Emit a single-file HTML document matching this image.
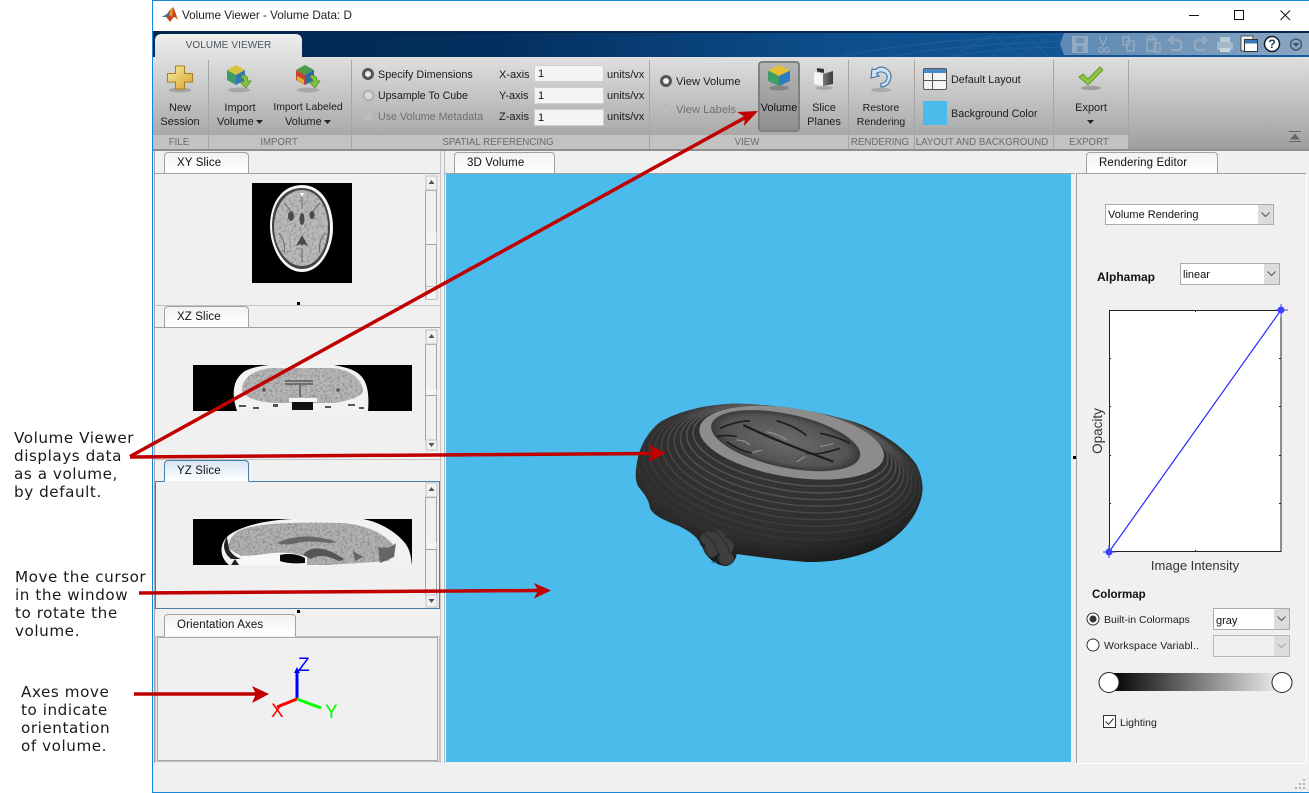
<!DOCTYPE html>
<html><head><meta charset="utf-8"><title>Volume Viewer</title>
<style>
html,body{margin:0;padding:0;background:#fff;width:1309px;height:793px;overflow:hidden}
body{position:relative;font-family:"Liberation Sans",sans-serif;font-size:11px;color:#1c1c1c}
.a{position:absolute}
.t{position:absolute;white-space:nowrap;line-height:14px;font-size:10.8px;color:#1c1c1c}
.c{transform:translateX(-50%)}
.sec{position:absolute;top:135px;height:14px;line-height:15px;font-size:9.7px;color:#6c6c6c;white-space:nowrap;transform:translateX(-50%)}
.sep{position:absolute;top:60px;width:1px;height:89px;background:#a6a6a6}
.note{position:absolute;left:14px;font-family:"DejaVu Sans",sans-serif;font-size:15.2px;letter-spacing:.55px;line-height:18px;color:#1a1a1a;white-space:nowrap}
.tab{position:absolute;height:21px;box-sizing:border-box;border:1px solid #a2a2a2;border-bottom:none;border-radius:4px 4px 0 0;background:linear-gradient(#f2f2f2,#fff);text-align:left;line-height:21px;font-size:11.5px;letter-spacing:.12px;color:#111;padding-left:12px}
.hl{position:absolute;height:1px;background:#a0a0a0}
.vl{position:absolute;width:1px;background:#a0a0a0}
.inp{position:absolute;left:534px;width:70px;height:17px;box-sizing:border-box;background:#f4f4f4;border:1px solid #cfcfcf;line-height:17px;padding-left:3px;font-size:11px;color:#111}
.rad{position:absolute;width:11px;height:11px;border-radius:50%;box-sizing:border-box;background:radial-gradient(#e4e4e4,#bdbdbd);border:1px solid #a0a0a0}
.rad.on{border:3px solid #555;background:#eee;width:12px;height:12px}
.rad.off{border-color:#b5b5b5;background:#bcbcbc}
.dd{position:absolute;box-sizing:border-box;border:1px solid #ababab;background:#fff;font-size:11px;padding-left:2px;color:#111}
.dd i{position:absolute;right:0;top:0;bottom:0;width:15px;background:#dcdcdc}
.dd svg{position:absolute;right:3px;top:50%;margin-top:-3px}
</style></head><body>

<!-- window frame -->
<div class="a" style="left:152px;top:0;width:1157px;height:793px;box-sizing:border-box;border:1px solid #1a86d8;border-right:none;background:#f0f0f0"></div>
<div class="a" style="left:153px;top:1px;width:1156px;height:30px;background:#fff"></div>

<!-- title -->
<svg class="a" style="left:161px;top:6px" width="18" height="18" viewBox="0 0 18 18"><path d="M1 11l5-3 3-4 3-3c2 3 3 8 5 13-2-2-3-3-4-3-2 2-3 4-4 5-2-3-3-4-4-5z" fill="#c9401a"/><path d="M1 11l5-3 3-4c-1 3-1 5-2 7-1 0-3 0-6 0z" fill="#3f6f9a"/><path d="M12 1c-2 1-3 5-4 8l3 2c1-3 1-7 1-10z" fill="#e8922a"/></svg>
<div class="t" style="left:182px;top:9px;font-size:11.7px;color:#222">Volume Viewer - Volume Data: D</div>
<svg class="a" style="left:1180px;top:4px" width="125" height="22" viewBox="0 0 125 22"><path d="M9 11.5h10" stroke="#111" fill="none"/><rect x="54.5" y="6.5" width="9" height="9" fill="none" stroke="#111"/><path d="M100.5 6.500l9.500 9.500M110 6.500l-9.500 9.500" stroke="#111" fill="none"/></svg>

<!-- dark band -->
<div class="a" style="left:153px;top:31px;width:1156px;height:26px;background:linear-gradient(90deg,#02274d 0%,#032f5f 30%,#0e4f8e 60%,#175c9c 100%)"></div>
<svg class="a" style="left:800px;top:31px" width="280" height="26" viewBox="0 0 280 26"><g stroke="#2f6fa8" stroke-width=".7" fill="none" opacity=".55"><path d="M40 26C90 14 160 8 280 2M90 26C140 16 200 12 280 10M150 26c40-8 80-10 130-10M200 0l-50 26M230 0l-40 26M260 0l-40 26M190 0l30 26M220 0l30 26M250 0l30 26"/></g></svg>
<div class="a" style="left:153px;top:31px;width:1156px;height:2px;background:#03264c"></div>
<div class="a" style="left:155px;top:34px;width:147px;height:24px;box-sizing:border-box;background:linear-gradient(#efefef,#dcdcdc);border-radius:6px 6px 0 0;text-align:center;line-height:24px;font-size:10px;color:#4a5560;letter-spacing:.1px">VOLUME VIEWER</div>

<!-- quick access -->
<svg class="a" style="left:1058px;top:33px" width="251" height="24" viewBox="0 0 251 24">
<defs><linearGradient id="qa" x1="0" x2="1" y1="0" y2="0"><stop offset="0" stop-color="#5c89b3"/><stop offset="1" stop-color="#8aa6c2"/></linearGradient></defs>
<path d="M6 0H251V22H6L2 11z" fill="url(#qa)"/>
<g fill="none" stroke="#94a9bf" stroke-width="2">
<rect x="15" y="4" width="14" height="15" fill="#94a9bf"/><rect x="18" y="5" width="8" height="5" fill="#6f94b8" stroke="none"/><rect x="19" y="13" width="6" height="6" fill="#6f94b8" stroke="none"/>
<path d="M41 3l4 10M49 3l-4 10" stroke-width="1.200"/><circle cx="43" cy="17" r="2.500" stroke-width="1.200"/><circle cx="49" cy="17" r="2.500" stroke-width="1.200"/>
<rect x="65" y="4" width="6" height="8" stroke-width="1.500"/><rect x="69" y="8" width="7" height="10" stroke-width="1.500"/>
<rect x="89" y="6" width="9" height="12" stroke-width="1.500"/><rect x="96" y="10" width="6" height="9" stroke-width="1.500"/><rect x="91" y="3" width="5" height="4" stroke-width="1.200"/>
<path d="M112 7h7c6 0 6 10 0 10h-6M116 3l-5 4 5 4" stroke-width="2.200"/><path d="M147 17h-6c-6 0-6-10 0-10h7M144 3l5 4-5 4" stroke-width="2.200"/></g>
<rect x="159" y="9" width="16" height="8" rx="1" fill="#a5b8ca"/><rect x="162" y="4" width="10" height="5" fill="#bac9d6"/><rect x="162" y="15" width="10" height="4" fill="#c9d4de"/>
<rect x="183" y="3" width="12" height="15" fill="#f2f2f2" stroke="#333" stroke-width=".8"/><rect x="186.500" y="6.500" width="13" height="12" fill="#fff" stroke="#333" stroke-width="1"/><rect x="187" y="7" width="12" height="3.500" fill="#3a78ba"/>
</svg>
<svg class="a" style="left:1263px;top:35px" width="44" height="20" viewBox="0 0 44 20"><circle cx="9" cy="9" r="7.500" fill="#fff" stroke="#123" stroke-width="1.500"/><text x="9" y="13" font-family="Liberation Sans" font-size="12" font-weight="700" fill="#123a66" text-anchor="middle">?</text><circle cx="33" cy="9.500" r="5.500" fill="none" stroke="#3e5468" stroke-width="1.300"/><path d="M29.500 8h7l-3.500 4z" fill="#3e5468"/></svg>

<!-- toolstrip -->
<div class="a" style="left:153px;top:57px;width:1156px;height:78px;background:linear-gradient(#dfdfdf,#a9a9a9)"></div>
<div class="a" style="left:153px;top:135px;width:975px;height:14px;background:#c2c2c2"></div>
<div class="a" style="left:1128px;top:135px;width:181px;height:14px;background:linear-gradient(#a9a9a9,#9d9d9d)"></div>
<div class="a" style="left:153px;top:149px;width:1156px;height:2px;background:#8e8e8e"></div>
<div class="sep" style="left:208px"></div><div class="sep" style="left:351px"></div><div class="sep" style="left:649px"></div><div class="sep" style="left:848px"></div><div class="sep" style="left:914px"></div><div class="sep" style="left:1053px"></div><div class="sep" style="left:1128px"></div>

<div class="sec" style="left:179px">FILE</div><div class="sec" style="left:279px">IMPORT</div><div class="sec" style="left:498px">SPATIAL REFERENCING</div><div class="sec" style="left:747px">VIEW</div><div class="sec" style="left:880px">RENDERING</div><div class="sec" style="left:982px">LAYOUT AND BACKGROUND</div><div class="sec" style="left:1089px">EXPORT</div>

<!-- icon: new session -->
<svg class="a" style="left:166px;top:63px" width="28" height="32" viewBox="0 0 28 32"><defs><linearGradient id="gd" x1="0" y1="0" x2="1" y2="1"><stop offset="0" stop-color="#f8e9a8"/><stop offset="1" stop-color="#d6a52a"/></linearGradient></defs><ellipse cx="14" cy="27" rx="11" ry="2.500" fill="#8c8c8c" opacity=".6"/><path d="M9.500 3h9v7.500h8v8.500h-8v7h-9v-7h-8v-8.500h8z" fill="url(#gd)" stroke="#a8801e"/></svg>
<div class="t c" style="left:180px;top:101px;font-size:11px">New</div><div class="t c" style="left:180px;top:115px;font-size:11px">Session</div>

<!-- icon: import volume -->
<svg class="a" style="left:225px;top:63px" width="30" height="32" viewBox="0 0 30 32"><ellipse cx="14" cy="27" rx="11" ry="2.500" fill="#8c8c8c" opacity=".55"/><path d="M2 7l9-5 9 5-9 5z" fill="#d8c23a"/><path d="M2 7l9 5v10l-9-5z" fill="#3f9a6a"/><path d="M11 12l9-5v10l-9 5z" fill="#2e78b8"/><path d="M17 12c4 0 6 2 6 6h3l-5 7-6-6h4c0-3-1-4-3-4z" fill="#7cc442" stroke="#4d8a22" stroke-width=".7"/></svg>
<div class="t c" style="left:240px;top:101px;font-size:11px">Import</div><div class="t" style="left:217px;top:115px;font-size:11px">Volume</div>
<svg class="a" style="left:255px;top:120px" width="10" height="5"><path d="M1 0h7l-3.500 4z" fill="#222"/></svg>

<!-- icon: import labeled -->
<svg class="a" style="left:294px;top:63px" width="30" height="32" viewBox="0 0 30 32"><ellipse cx="14" cy="27" rx="11" ry="2.500" fill="#8c8c8c" opacity=".55"/><path d="M2 7l9-5 9 5-9 5z" fill="#4d9a4a"/><path d="M2 7l9 5v10l-9-5z" fill="#c9462c"/><path d="M11 12l9-5v10l-9 5z" fill="#2e66a8"/><path d="M3 13l7 4v4l-7-4z" fill="#e0b82e"/><path d="M17 12c4 0 6 2 6 6h3l-5 7-6-6h4c0-3-1-4-3-4z" fill="#7cc442" stroke="#4d8a22" stroke-width=".7"/></svg>
<div class="t c" style="left:308px;top:101px;font-size:10.4px">Import Labeled</div><div class="t" style="left:285px;top:115px;font-size:11px">Volume</div>
<svg class="a" style="left:323px;top:120px" width="10" height="5"><path d="M1 0h7l-3.500 4z" fill="#222"/></svg>

<!-- spatial referencing -->
<div class="rad on" style="left:362px;top:68px"></div><div class="t" style="left:378px;top:68px">Specify Dimensions</div>
<div class="rad" style="left:363px;top:90px"></div><div class="t" style="left:378px;top:89px;font-size:10.6px">Upsample To Cube</div>
<div class="rad off" style="left:363px;top:111px"></div><div class="t" style="left:378px;top:110px;color:#707070;font-size:10.7px">Use Volume Metadata</div>
<div class="t" style="left:499px;top:68px;font-size:11px">X-axis</div><div class="t" style="left:499px;top:89px;font-size:11px">Y-axis</div><div class="t" style="left:499px;top:110px;font-size:11px">Z-axis</div>
<div class="inp" style="top:65px">1</div><div class="inp" style="top:87px">1</div><div class="inp" style="top:109px">1</div>
<div class="t" style="left:607px;top:68px;font-size:11px">units/vx</div><div class="t" style="left:607px;top:89px;font-size:11px">units/vx</div><div class="t" style="left:607px;top:110px;font-size:11px">units/vx</div>

<!-- view -->
<div class="rad on" style="left:660px;top:75px"></div><div class="t" style="left:676px;top:75px;font-size:11.2px">View Volume</div>
<div class="rad off" style="left:661px;top:104px"></div><div class="t" style="left:676px;top:103px;color:#707070;font-size:11.2px">View Labels</div>
<div class="a" style="left:758px;top:61px;width:42px;height:71px;box-sizing:border-box;border:2px solid #808080;border-radius:4px;background:linear-gradient(#b5b5b5,#8f8f8f)"></div>
<svg class="a" style="left:766px;top:64px" width="26" height="28" viewBox="0 0 26 28"><ellipse cx="13" cy="24" rx="10" ry="2.500" fill="#707070" opacity=".6"/><path d="M13 1l11 5.500-11 5.500L2 6.500z" fill="#e3c132"/><path d="M2 6.500l11 5.500v10L2 17z" fill="#3f9d68"/><path d="M13 12l11-5.500V17l-11 5z" fill="#2b7cc0"/></svg>
<div class="t c" style="left:779px;top:101px;color:#111;font-size:11px">Volume</div>
<svg class="a" style="left:812px;top:66px" width="24" height="26" viewBox="0 0 24 26"><defs><linearGradient id="sl" x1="0" x2="1" y1="0" y2="0"><stop offset="0" stop-color="#777"/><stop offset="1" stop-color="#3a3a3a"/></linearGradient></defs><ellipse cx="12" cy="22" rx="9" ry="2" fill="#8c8c8c" opacity=".5"/><path d="M2 6l9 2v12l-9-2z" fill="#f5f5f5"/><path d="M11 8l10-3v13l-10 2z" fill="url(#sl)"/><path d="M5 2l7 1v4l-7-1.500z" fill="#333"/></svg>
<div class="t c" style="left:824px;top:101px;font-size:11px">Slice</div><div class="t c" style="left:824px;top:115px;font-size:11px">Planes</div>
<svg class="a" style="left:866px;top:63px" width="30" height="32" viewBox="0 0 30 32"><ellipse cx="15" cy="27" rx="10" ry="2.200" fill="#8c8c8c" opacity=".5"/><path d="M6 6l-1 9 8-2-2.500-2.500C14 7.500 20 9 21 13c.8 4-2 7-6 7.500v3.500c6 0 10-5 10-11C24 6 16 1 9.500 6.500z" fill="#cfe3f2" stroke="#3d6f9e" stroke-width="1.100"/></svg>
<div class="t c" style="left:881px;top:101px;font-size:10.5px">Restore</div><div class="t c" style="left:881px;top:115px;font-size:10.5px">Rendering</div>

<!-- layout -->
<svg class="a" style="left:923px;top:68px" width="24" height="23" viewBox="0 0 24 23"><rect x=".5" y=".5" width="23" height="21" rx="1.500" fill="#f4f4f4" stroke="#555"/><rect x="1" y="1" width="22" height="4" fill="#4a8cc7"/><path d="M1 12.500h22M9.500 5v17" stroke="#555" fill="none"/></svg>
<div class="t" style="left:951px;top:73px;font-size:10.8px">Default Layout</div>
<div class="a" style="left:923px;top:101px;width:24px;height:24px;background:#4bbbec"></div>
<div class="t" style="left:951px;top:107px;font-size:10.8px">Background Color</div>

<!-- export -->
<svg class="a" style="left:1077px;top:66px" width="28" height="28" viewBox="0 0 28 28"><ellipse cx="14" cy="22" rx="10" ry="2.200" fill="#808080" opacity=".6"/><path d="M2 11l4-3 5 5L23 1l3 3-15 15z" fill="#8cc63f" stroke="#5c8c2a" stroke-width=".8"/></svg>
<div class="t c" style="left:1091px;top:101px;font-size:11px">Export</div>
<svg class="a" style="left:1086px;top:120px" width="10" height="5"><path d="M1 0h7l-3.500 4z" fill="#222"/></svg>
<svg class="a" style="left:1289px;top:131px" width="12" height="12"><path d="M0 .5h12" stroke="#666"/><path d="M6 2.500L11 8.500H1z" fill="#666"/><path d="M0 10.500h12" stroke="#666"/></svg>

<!-- LEFT PANELS -->
<svg width="0" height="0" class="a"><defs>
<filter id="nz" x="0" y="0" width="1" height="1"><feTurbulence type="fractalNoise" baseFrequency=".4" numOctaves="2" seed="4"/><feColorMatrix values="0 0 0 0 0 0 0 0 0 0 0 0 0 0 0 1.100 0 0 0 -.45"/><feComposite in2="SourceAlpha" operator="in" result="s"/><feMerge><feMergeNode in="SourceGraphic"/><feMergeNode in="s"/></feMerge></filter>
</defs></svg>
<div class="a" style="left:154px;top:151px;width:1px;height:612px;background:#a8a8a8"></div>
<div class="a" style="left:440px;top:151px;width:1px;height:612px;background:#c4c4c4"></div>
<div class="hl" style="left:154px;top:173px;width:286px"></div>
<div class="tab" style="left:164px;top:152px;width:85px">XY Slice</div>
<svg class="a" style="left:252px;top:183px" width="100" height="100" viewBox="0 0 100 100"><rect width="100" height="100" fill="#000"/>
<path d="M50 2c20 0 31 20 31 43 0 20-12 44-31 44-20 0-32-25-32-46C18 20 30 2 50 2z" fill="#f6f6f6"/>
<path d="M50 5c18 0 28 18 28 40 0 19-10 41-28 41S20 63 20 43C20 20 32 5 50 5z" fill="#444"/>
<path d="M50 7c16 0 26 17 26 37 0 18-9 39-26 39S22 62 22 44C22 24 34 7 50 7z" fill="#bcbcbc" filter="url(#nz)"/>
<g fill="#4a4a4a"><ellipse cx="39" cy="33" rx="3" ry="5"/><ellipse cx="60" cy="32" rx="2.500" ry="4"/><ellipse cx="50" cy="36" rx="2.500" ry="6"/><path d="M50 52l-6 11 5-2 1 3 1-3 5 2z"/></g><g fill="none" stroke="#6a6a6a" stroke-width="1"><path d="M27 50c4 5 7 12 5 20M73 50c-4 5-7 12-5 20M32 20c3 3 6 6 7 10M68 20c-3 3-6 6-7 10M50 10v16M50 65v14"/></g><path d="M48 10l2 4 2-4z" fill="#fff"/></svg>
<div class="a" style="left:297px;top:302px;width:3px;height:3px;background:#000"></div>
<div class="hl" style="left:154px;top:305px;width:286px;background:#c4c4c4"></div>
<div class="hl" style="left:154px;top:327px;width:286px"></div>
<div class="tab" style="left:164px;top:306px;width:85px">XZ Slice</div>
<svg class="a" style="left:193px;top:365px" width="219" height="46" viewBox="0 0 219 46"><rect width="219" height="46" fill="#000"/>
<path d="M44 46C38 28 40 14 52 6 58 3 66 1 76 0h65c10 2 20 4 26 10 9 8 9 24 8 36z" fill="#f2f2f2"/>
<path d="M49 26C48 14 60 4 80 3h58c20 1 32 12 32 24-3 5-12 8-28 11H82C66 37 52 33 49 26z" fill="#b8b8b8" filter="url(#nz)"/>
<path d="M92 16h28M92 19h28M107 18v14" stroke="#666" stroke-width="1.800" fill="none"/>
<rect x="99" y="37" width="21" height="8" fill="#111"/><path d="M96 33h28v4H96z" fill="#f6f6f6"/>
<g fill="#555"><circle cx="71" cy="25" r="1.800"/><circle cx="145" cy="25" r="1.800"/><path d="M46 40h7v2h-7zM60 42h6v2h-6zM80 39h5v3h-5zM132 41h6v2h-6zM155 39h7v2h-7zM166 42h5v2h-5z"/></g></svg>
<div class="hl" style="left:154px;top:459px;width:286px;background:#c4c4c4"></div>
<div class="a" style="left:155px;top:481px;width:285px;height:128px;box-sizing:border-box;border:1px solid #4a7ca8"></div>
<div class="tab" style="left:164px;top:460px;width:85px;border-color:#4a7ca8;background:linear-gradient(#d9e6f3,#fff);height:22px;border-bottom:1px solid #f0f0f0">YZ Slice</div>
<svg class="a" style="left:193px;top:519px" width="219" height="46" viewBox="0 0 219 46"><rect width="219" height="46" fill="#000"/>
<path d="M36 46C26 38 26 24 36 16 50 6 75 1 100 0h70c16 3 32 12 42 24 6 8 6 16 7 22z" fill="#f2f2f2"/>
<path d="M36 30c-2-8 4-16 14-20C70 4 100 3 150 4c22 2 42 10 52 24l-6 14-60 4H110L90 38H50z" fill="#b2b2b2" filter="url(#nz)"/>
<path d="M84 24c8-4 22-8 38-6 8 1 16 3 22 5l-8 1c-14-2-24-2-32 0-8 2-14 2-20 0z" fill="#666"/>
<path d="M110 36c8-10 22-8 38 2 4 2 2 4-2 4-8-4-20-8-28-2z" fill="#555"/>
<path d="M40 36c10 2 24 0 40-2 10-1 24 0 34 4v8H48z" fill="#f8f8f8"/>
<path d="M87 36c8-2 18-1 25 3v5c-10 1-20 0-25-2z" fill="#0a0a0a"/>
<path d="M34 18c-4 6-4 12 0 18l4 4 10 0c-6-2-10-6-12-10zM42 40l4 6h-8z" fill="#222"/>
<path d="M185 28c8 2 14 0 18-4l-2 14-14 6zM160 32l10 6-8 4z" fill="#666"/></svg>
<div class="a" style="left:297px;top:610px;width:3px;height:3px;background:#000"></div>
<div class="a" style="left:155px;top:636px;width:285px;height:126px;box-sizing:border-box;border:1px solid #bdbdbd"></div>
<div class="a" style="left:157px;top:637px;width:281px;height:124px;box-sizing:border-box;border:1px solid #a8a8a8"></div>
<div class="tab" style="left:164px;top:614px;width:132px;height:23px;border-bottom:1px solid #f0f0f0">Orientation Axes</div>

<!-- scrollbars -->
<svg class="a" style="left:425px;top:175px" width="14" height="125" viewBox="0 0 14 125"><path d="M.5 15v109M11.500 15v109M.5 15.500h11M.5 69.500h11" stroke="#a4a4a4" fill="none"/><rect x="1.500" y="57" width="10" height="12" fill="#f4f4f4"/><rect x="1" y="1" width="11" height="14" fill="#f2f2f2" stroke="#c0c0c0"/><path d="M3.500 9h6L6.500 5z" fill="#555"/><rect x="1" y="111.500" width="11" height="13" fill="#f2f2f2" stroke="#c0c0c0"/></svg>
<svg class="a" style="left:425px;top:329px" width="14" height="122" viewBox="0 0 14 122"><path d="M.5 15v96M11.500 15v96M.5 15.500h11M.5 66.500h11" stroke="#a4a4a4" fill="none"/><rect x="1.500" y="60" width="10" height="6" fill="#f4f4f4"/><rect x="1" y="1" width="11" height="14" fill="#f2f2f2" stroke="#c0c0c0"/><path d="M3.500 9h6L6.500 5z" fill="#555"/><rect x="1" y="111" width="11" height="10" fill="#f2f2f2" stroke="#c0c0c0"/><path d="M3.500 114h6l-3 4z" fill="#555"/></svg>
<svg class="a" style="left:425px;top:482px" width="14" height="126" viewBox="0 0 14 126"><path d="M.5 15v98M11.500 15v98M.5 15.500h11M.5 67.500h11" stroke="#a4a4a4" fill="none"/><rect x="1.500" y="60" width="10" height="7" fill="#f4f4f4"/><rect x="1" y="1" width="11" height="14" fill="#f2f2f2" stroke="#c0c0c0"/><path d="M3.500 9h6L6.500 5z" fill="#555"/><rect x="1" y="113" width="11" height="12" fill="#f2f2f2" stroke="#c0c0c0"/><path d="M3.500 117h6l-3 4z" fill="#555"/></svg>

<!-- orientation axes -->
<svg class="a" style="left:260px;top:650px" width="90" height="80" viewBox="260 650 90 80"><path d="M297 699V672" stroke="#00f" stroke-width="3"/><path d="M294 673l3-6 3 6z" fill="#00f"/><path d="M297 699l-20 8" stroke="#f00" stroke-width="3"/><path d="M297 699l24 9" stroke="#0f0" stroke-width="3"/>
<text x="298" y="671" font-family="Liberation Sans" font-size="19" fill="#00f">Z</text>
<text x="271" y="717" font-family="Liberation Sans" font-size="19" fill="#f00">X</text>
<text x="325" y="718" font-family="Liberation Sans" font-size="19" fill="#0f0">Y</text></svg>

<!-- CENTER -->
<div class="hl" style="left:444px;top:173px;width:631px"></div>
<div class="tab" style="left:454px;top:152px;width:101px">3D Volume</div>
<div class="vl" style="left:444px;top:151px;height:612px;background:#bbb"></div>
<div class="a" style="left:446px;top:174px;width:625px;height:588px;background:#4bbbec"></div>
<div class="a" style="left:1073px;top:456px;width:3px;height:3px;background:#000"></div>

<!-- 3D head -->
<svg class="a" style="left:620px;top:390px" width="320" height="190" viewBox="0 0 960 570">
<defs>
<clipPath id="hd"><path d="M47 255C50 190 70 140 115 100 160 70 240 45 340 41 460 42 600 65 700 95 790 125 860 180 890 225 905 255 912 290 905 320 890 380 850 430 790 465 730 500 640 518 560 516 480 510 410 500 350 492 347 512 335 528 315 528 290 525 270 510 255 490 240 450 225 430 170 405 130 390 100 375 90 355 86 325 70 310 55 290 50 280 47 270 47 255Z"/></clipPath>
<radialGradient id="hg" cx=".5" cy=".35" r=".65"><stop offset="0" stop-color="#363636"/><stop offset=".75" stop-color="#2e2e2e"/><stop offset="1" stop-color="#1a1a1a"/></radialGradient>
<radialGradient id="br" cx=".5" cy=".5" r=".55"><stop offset="0" stop-color="#727272"/><stop offset=".75" stop-color="#5a5a5a"/><stop offset="1" stop-color="#2e2e2e"/></radialGradient>
</defs>
<path d="M47 255C50 190 70 140 115 100 160 70 240 45 340 41 460 42 600 65 700 95 790 125 860 180 890 225 905 255 912 290 905 320 890 380 850 430 790 465 730 500 640 518 560 516 480 510 410 500 350 492 347 512 335 528 315 528 290 525 270 510 255 490 240 450 225 430 170 405 130 390 100 375 90 355 86 325 70 310 55 290 50 280 47 270 47 255Z" fill="url(#hg)"/>
<g clip-path="url(#hd)" fill="none" stroke="#585858" stroke-width="4.500">
<ellipse cx="511.500" cy="167.500" rx="295.500" ry="113.500" transform="rotate(9 511.500 167.500)" opacity=".9"/>
<ellipse cx="508" cy="177" rx="311" ry="124" transform="rotate(9 508 177)" opacity=".85"/>
<ellipse cx="504.500" cy="186.500" rx="326.500" ry="134.500" transform="rotate(9 504.500 186.500)" opacity=".8"/>
<ellipse cx="501" cy="196" rx="342" ry="145" transform="rotate(9 501 196)" opacity=".7"/>
<ellipse cx="497.500" cy="205.500" rx="357.500" ry="155.500" transform="rotate(9 497.500 205.500)" opacity=".6"/>
<ellipse cx="494" cy="215" rx="373" ry="166" transform="rotate(9 494 215)" opacity=".48"/>
<ellipse cx="490.500" cy="224.500" rx="388.500" ry="176.500" transform="rotate(9 490.500 224.500)" opacity=".36"/>
<ellipse cx="487" cy="234" rx="404" ry="187" transform="rotate(9 487 234)" opacity=".26"/>
<ellipse cx="483.500" cy="243.500" rx="419.500" ry="197.500" transform="rotate(9 483.500 243.500)" opacity=".18"/>
<ellipse cx="480" cy="253" rx="435" ry="208" transform="rotate(9 480 253)" opacity=".12"/>
</g>
<ellipse cx="515" cy="158" rx="280" ry="103" transform="rotate(9 515 158)" fill="#8c8c8c"/>
<ellipse cx="497" cy="152" rx="228" ry="80" transform="rotate(12 497 152)" fill="url(#br)" filter="url(#nz)"/>
<g fill="none" stroke="#1e1e1e" stroke-width="5"><path d="M370 105c60 30 170 75 270 110" stroke-width="7"/><path d="M300 115c30-14 70-24 90-22M320 155c20 15 50 30 80 35M470 92c30 10 60 20 90 45M600 130c30 5 60 15 90 30M560 190c30 5 60-2 100-15M290 140c20-5 40-5 60 0"/></g>
<g fill="none" stroke="#999" stroke-width="3"><path d="M395 190c10-5 20-8 30-8M530 215c10-5 15-10 25-15M600 170c15-3 30-6 40-10M350 150c15 0 30 5 40 15M440 125c20 5 40 10 60 25"/></g>
<g fill="#3e3e3e"><ellipse cx="265" cy="445" rx="24" ry="20"/><ellipse cx="295" cy="440" rx="20" ry="18"/><ellipse cx="275" cy="478" rx="22" ry="24"/><ellipse cx="315" cy="470" rx="26" ry="26"/><ellipse cx="318" cy="505" rx="24" ry="20"/></g>
<g fill="none" stroke="#282828" stroke-width="3"><path d="M250 430c20 10 45 35 50 85M280 420c20 15 40 35 50 70M240 460c12 15 22 28 30 45"/></g>
<path d="M275 515l15 3" stroke="#2a6a90" stroke-width="4"/>
</svg>

<!-- RIGHT PANEL -->
<div class="vl" style="left:1076px;top:173px;height:590px"></div>
<div class="hl" style="left:1076px;top:173px;width:230px"></div>
<div class="a" style="left:1076px;top:763px;width:231px;height:1px;background:#fff"></div>
<div class="a" style="left:1306px;top:173px;width:1px;height:590px;background:#fff"></div>
<div class="tab" style="left:1086px;top:152px;width:132px">Rendering Editor</div>

<div class="dd" style="left:1105px;top:204px;width:169px;height:21px;line-height:21px">Volume Rendering<i></i><svg width="9" height="6"><path d="M.5.500l4 4 4-4" stroke="#555" fill="none"/></svg></div>
<div class="t" style="left:1097px;top:270px;font-weight:700;font-size:12px;color:#111">Alphamap</div>
<div class="dd" style="left:1180px;top:263px;width:100px;height:22px;line-height:23px">linear<i></i><svg width="9" height="6"><path d="M.5.500l4 4 4-4" stroke="#555" fill="none"/></svg></div>

<svg class="a" style="left:1085px;top:300px" width="210" height="280" viewBox="1085 300 210 280">
<rect x="1109.500" y="310.500" width="171.500" height="241" fill="#fff" stroke="#222"/>
<path d="M1109 358.500h2M1109 406.500h2M1109 455.500h2M1109 503.500h2M1279 358.500h2M1279 406.500h2M1279 455.500h2M1279 503.500h2M1195.500 310v2M1195.500 550v2" stroke="#222"/>
<path d="M1109 552L1281 310" stroke="#2a2aff" stroke-width="1.200"/>
<circle cx="1109" cy="552" r="3.500" fill="#4040ff"/><circle cx="1281" cy="310" r="3.500" fill="#4040ff"/>
<path d="M1103 552h13M1109 545v13M1275 310h13M1281 304v13" stroke="#4040ff"/>
</svg>
<div class="t" style="left:1098px;top:431px;font-size:13.500px;color:#333;transform:translate(-50%,-50%) rotate(-90deg)">Opacity</div>
<div class="t c" style="left:1195px;top:559px;font-size:13px;color:#333">Image Intensity</div>

<div class="t" style="left:1092px;top:588px;font-weight:700;font-size:11.500px;color:#111">Colormap</div>
<svg class="a" style="left:1086px;top:612px" width="14" height="40"><circle cx="7" cy="7" r="6" fill="#fff" stroke="#333"/><circle cx="7" cy="7" r="3.500" fill="#333"/><circle cx="7" cy="33" r="6" fill="#fff" stroke="#333"/></svg>
<div class="t" style="left:1104px;top:613px;font-size:10.500px">Built-in Colormaps</div>
<div class="t" style="left:1104px;top:639px;font-size:10.500px;letter-spacing:.1px">Workspace Variabl..</div>
<div class="dd" style="left:1213px;top:608px;width:77px;height:22px;line-height:24px">gray<i></i><svg width="9" height="6"><path d="M.5.500l4 4 4-4" stroke="#555" fill="none"/></svg></div>
<div class="dd" style="left:1213px;top:635px;width:77px;height:22px;background:#f0f0f0;border-color:#b8b8b8"><i></i><svg width="9" height="6"><path d="M.5.500l4 4 4-4" stroke="#aaa" fill="none"/></svg></div>
<div class="a" style="left:1110px;top:673px;width:172px;height:18px;background:linear-gradient(90deg,#000,#f0f0f0)"></div>
<svg class="a" style="left:1098px;top:671px" width="196" height="23"><circle cx="11" cy="11.500" r="10" fill="#fff" stroke="#222"/><circle cx="184" cy="11.500" r="10" fill="#fff" stroke="#222"/></svg>
<svg class="a" style="left:1103px;top:715px" width="14" height="14"><rect x=".5" y=".5" width="12" height="12" fill="#fff" stroke="#333"/><path d="M2.500 6.500l3 3 5-6" stroke="#333" fill="none"/></svg>
<div class="t" style="left:1120px;top:716px;font-size:10.500px">Lighting</div>

<!-- grip -->
<svg class="a" style="left:1295px;top:779px" width="12" height="12"><g fill="#b4b4b4"><rect x="8" y="0" width="2" height="2"/><rect x="4" y="4" width="2" height="2"/><rect x="8" y="4" width="2" height="2"/><rect x="0" y="8" width="2" height="2"/><rect x="4" y="8" width="2" height="2"/><rect x="8" y="8" width="2" height="2"/></g></svg>

<!-- red annotation arrows -->
<svg class="a" style="left:0;top:0" width="1309" height="793" viewBox="0 0 1309 793">
<g fill="none" stroke="#c00000" stroke-width="3.500"><path d="M130 456.500L748 116"/><path d="M130 457L652 453.500"/><path d="M139 593L538 590.500"/><path d="M134 694H258"/></g>
<g fill="#c00000"><path d="M758 111L737 112l8 5-1 9z"/><path d="M666 453L649 445l3 8-3 9z"/><path d="M551 590.500L534 583l4 7.500-4 8z"/><path d="M269 694L252 686l4 8-4 9z"/></g>
</svg>

<!-- annotation text -->
<div class="note" style="top:429px">Volume Viewer<br>displays data<br>as a volume,<br>by default.</div>
<div class="note" style="top:568px;left:15px">Move the cursor<br>in the window<br>to rotate the<br>volume.</div>
<div class="note" style="top:683px;left:21px">Axes move<br>to indicate<br>orientation<br>of volume.</div>
</body></html>
